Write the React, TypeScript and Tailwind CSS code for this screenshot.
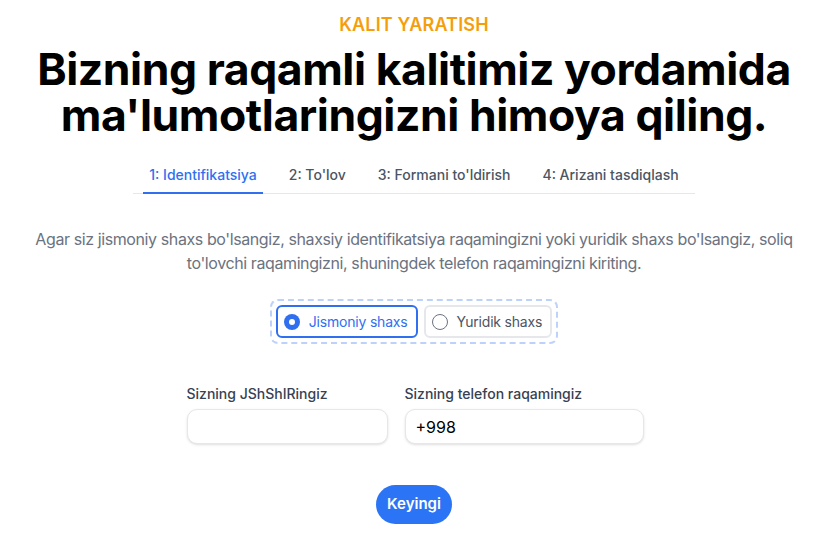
import { useState } from 'react';

const TABS = ['1: Identifikatsiya', "2: To'lov", "3: Formani to'ldirish", '4: Arizani tasdiqlash'];

type Kind = 'jismoniy' | 'yuridik';

export default function App() {
  const [kind, setKind] = useState<Kind>('jismoniy');
  const [phone, setPhone] = useState('+998');
  const [pinfl, setPinfl] = useState('');

  return (
    <div className="flex min-h-screen flex-col items-center bg-white pt-[11px] font-['Inter','Liberation_Sans',sans-serif] text-black">
      <p className="text-[18px] font-semibold leading-[28px] tracking-[0.01em] text-[#f59e0b]">KALIT YARATISH</p>

      <h1 className="mt-[7px] text-center text-[44.5px] font-bold leading-[46px] tracking-[-0.01em]">
        Bizning raqamli kalitimiz yordamida
        <br />
        ma&apos;lumotlaringizni himoya qiling.
      </h1>

      <nav className="mt-[27px] flex gap-5 border-b border-[#e5e7eb] px-2.5">
        {TABS.map((tab, i) => (
          <div
            key={tab}
            className={
              i === 0
                ? '-mb-px border-b-2 border-[#2f6ff0] px-1.5 pb-[7px] text-[14px] font-medium leading-5 text-[#2f6ff0]'
                : '-mb-px border-b-2 border-transparent px-1.5 pb-[7px] text-[14px] font-medium leading-5 text-[#4b5563]'
            }
          >
            {tab}
          </div>
        ))}
      </nav>

      <p className="mt-[33px] max-w-[780px] text-center text-[16px] leading-6 tracking-[-0.4px] text-[#6b7280]">
        Agar siz jismoniy shaxs bo&apos;lsangiz, shaxsiy identifikatsiya raqamingizni yoki yuridik shaxs bo&apos;lsangiz, soliq
        to&apos;lovchi raqamingizni, shuningdek telefon raqamingizni kiriting.
      </p>

      <div className="mt-[24px] flex gap-1.5 rounded-lg border-2 border-dashed border-[#bcd2fa] p-1">
        <Option label="Jismoniy shaxs" checked={kind === 'jismoniy'} onClick={() => setKind('jismoniy')} />
        <Option label="Yuridik shaxs" checked={kind === 'yuridik'} onClick={() => setKind('yuridik')} />
      </div>

      <div className="mt-[40px] flex gap-[17px] pl-[2px]">
        <label className="flex w-[201px] flex-col gap-[5px]">
          <span className="text-[14px] font-medium leading-5 text-[#374151]">Sizning JShShIRingiz</span>
          <input
            value={pinfl}
            onChange={(e) => setPinfl(e.target.value)}
            className="h-[35px] rounded-[10px] border border-[#e5e7eb] bg-white px-[10px] text-[16px] shadow-sm outline-none"
          />
        </label>
        <label className="flex w-[239px] flex-col gap-[5px]">
          <span className="text-[14px] font-medium leading-5 text-[#374151]">Sizning telefon raqamingiz</span>
          <input
            value={phone}
            onChange={(e) => setPhone(e.target.value)}
            className="h-[35px] rounded-[10px] border border-[#e5e7eb] bg-white px-[10px] text-[16px] text-black shadow-sm outline-none"
          />
        </label>
      </div>

      <button
        type="button"
        className="mt-[41px] h-[39px] w-[76px] rounded-full bg-[#2b74f5] text-[15px] font-semibold text-white"
      >
        Keyingi
      </button>
    </div>
  );
}

function Option({ label, checked, onClick }: { label: string; checked: boolean; onClick: () => void }) {
  return (
    <button
      type="button"
      onClick={onClick}
      className={
        checked
          ? 'flex h-[33px] items-center gap-[9px] whitespace-nowrap rounded-md border-2 border-[#2f6ff0] pl-[6px] pr-[8px] text-[14px] leading-5 tracking-[-0.2px] text-[#2f6ff0]'
          : 'flex h-[33px] items-center gap-[9px] whitespace-nowrap rounded-md border-2 border-[#e5e7eb] pl-[6px] pr-[8px] text-[14px] leading-5 tracking-[-0.2px] text-[#4b5563]'
      }
    >
      <Radio checked={checked} />
      {label}
    </button>
  );
}

function Radio({ checked }: { checked: boolean }) {
  if (checked) {
    return (
      <span className="grid h-4 w-4 shrink-0 place-items-center rounded-full bg-[#2f6ff0]">
        <span className="h-1.5 w-1.5 rounded-full bg-white" />
      </span>
    );
  }
  return <span className="h-4 w-4 shrink-0 rounded-full border-[1.5px] border-[#6b7280]" />;
}
